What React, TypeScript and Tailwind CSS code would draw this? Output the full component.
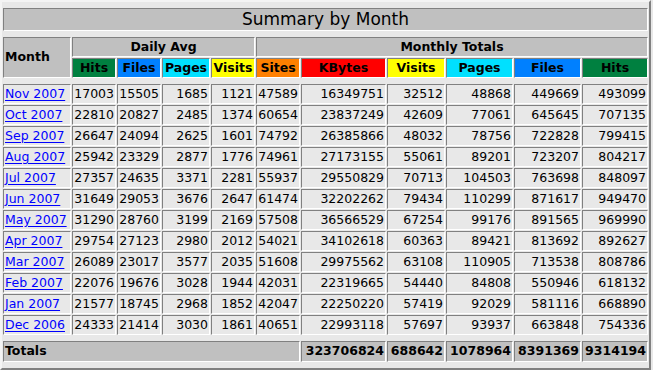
const rows: [string, number[]][] = [
  ['Nov 2007', [17003, 15505, 1685, 1121, 47589, 16349751, 32512, 48868, 449669, 493099]],
  ['Oct 2007', [22810, 20827, 2485, 1374, 60654, 23837249, 42609, 77061, 645645, 707135]],
  ['Sep 2007', [26647, 24094, 2625, 1601, 74792, 26385866, 48032, 78756, 722828, 799415]],
  ['Aug 2007', [25942, 23329, 2877, 1776, 74961, 27173155, 55061, 89201, 723207, 804217]],
  ['Jul 2007', [27357, 24635, 3371, 2281, 55937, 29550829, 70713, 104503, 763698, 848097]],
  ['Jun 2007', [31649, 29053, 3676, 2647, 61474, 32202262, 79434, 110299, 871617, 949470]],
  ['May 2007', [31290, 28760, 3199, 2169, 57508, 36566529, 67254, 99176, 891565, 969990]],
  ['Apr 2007', [29754, 27123, 2980, 2012, 54021, 34102618, 60363, 89421, 813692, 892627]],
  ['Mar 2007', [26089, 23017, 3577, 2035, 51608, 29975562, 63108, 110905, 713538, 808786]],
  ['Feb 2007', [22076, 19676, 3028, 1944, 42031, 22319665, 54440, 84808, 550946, 618132]],
  ['Jan 2007', [21577, 18745, 2968, 1852, 42047, 22250220, 57419, 92029, 581116, 668890]],
  ['Dec 2006', [24333, 21414, 3030, 1861, 40651, 22993118, 57697, 93937, 663848, 754336]],
];

const totals = [323706824, 688642, 1078964, 8391369, 9314194];

// webalizer-ish group colours
const headers: [string, string][] = [
  ['Hits', 'bg-[#008040]'],
  ['Files', 'bg-[#0080ff]'],
  ['Pages', 'bg-[#00e0ff]'],
  ['Visits', 'bg-[#ffff00]'],
  ['Sites', 'bg-[#ff8000]'],
  ['KBytes', 'bg-[#ff0000]'],
  ['Visits', 'bg-[#ffff00]'],
  ['Pages', 'bg-[#00e0ff]'],
  ['Files', 'bg-[#0080ff]'],
  ['Hits', 'bg-[#008040]'],
];

const inset = 'border border-t-[#808080] border-l-[#808080] border-b-white border-r-white px-[1px]';

function Spacer() {
  return <div className="col-span-11 h-[4px]" />;
}

export default function App() {
  return (
    <div className="min-h-screen bg-[#e8e8e8] text-black" style={{ fontFamily: '"DejaVu Sans", Verdana, sans-serif' }}>
      <div className="w-[651px] border-2 border-t-[#f4f4f4] border-l-[#f4f4f4] border-r-[#808080] border-b-[#808080] p-[1px] bg-[#e8e8e8]">
        <div className="grid grid-cols-[68px_44px_44px_48px_44px_44px_85px_58px_67px_67px_66px] gap-[1px]">
          <Spacer />
          <div className={`${inset} col-span-11 h-[23px] flex items-center justify-center bg-[#c0c0c0] text-[17px]`}>
            Summary by Month
          </div>
          <Spacer />

          <div className={`${inset} row-span-2 flex items-center bg-[#c0c0c0] text-[12.5px] font-bold`}>Month</div>
          <div className={`${inset} col-span-4 h-[20px] flex items-center justify-center bg-[#c0c0c0] text-[12.5px] font-bold`}>
            Daily Avg
          </div>
          <div className={`${inset} col-span-6 h-[20px] flex items-center justify-center bg-[#c0c0c0] text-[12.5px] font-bold`}>
            Monthly Totals
          </div>
          {headers.map(([label, bg], i) => (
            <div key={i} className={`${inset} h-[20px] flex items-center justify-center ${bg} text-[12.5px] font-bold`}>
              {label}
            </div>
          ))}
          <Spacer />

          {rows.map(([month, vals]) => (
            <div key={month} className="contents">
              <div className={`${inset} h-[20px] flex items-center text-[12.5px]`}>
                <a href="#" className="text-[#0000ff] underline underline-offset-2">{month}</a>
              </div>
              {vals.map((v, i) => (
                <div key={i} className={`${inset} h-[20px] flex items-center justify-end text-[12.5px]`}>
                  {v}
                </div>
              ))}
            </div>
          ))}
          <Spacer />

          <div className={`${inset} col-span-6 h-[21px] flex items-center bg-[#c0c0c0] text-[12.5px] font-bold`}>Totals</div>
          {totals.map((v, i) => (
            <div key={i} className={`${inset} h-[21px] flex items-center justify-end bg-[#c0c0c0] text-[12.5px] font-bold`}>
              {v}
            </div>
          ))}
          <Spacer />
        </div>
      </div>
    </div>
  );
}
